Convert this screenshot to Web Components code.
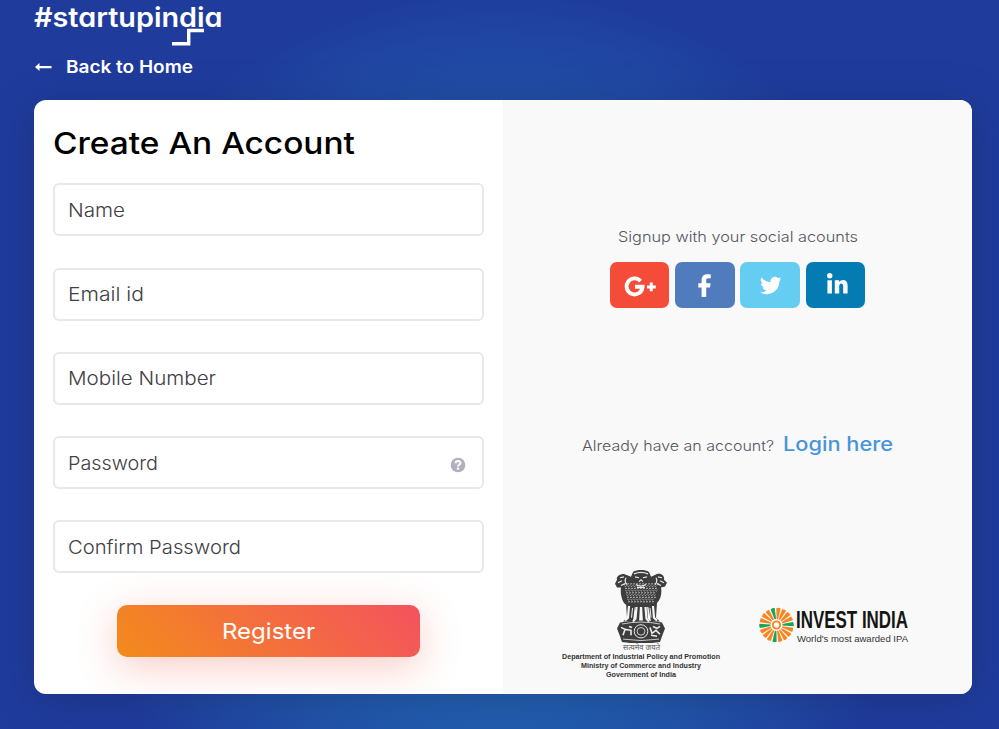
<!DOCTYPE html>
<html lang="en">
<head>
<meta charset="utf-8">
<title>Startup India - Create An Account</title>
<style>
    html, body {
        margin: 0;
        height: 100%;
        overflow: hidden;
        font-family: Inter, "Open Sans", sans-serif;
    }
</style>
</head>
<body>
<signup-page></signup-page>

<script>
// One line of text set to an exact measure. Caps are centred on the box.
class FitText extends HTMLElement {
    constructor() {
        super();
        this.attachShadow({ mode: "open" });
    }

    connectedCallback() {
        const width = Number(this.getAttribute("width"));
        const size = Number(this.getAttribute("size"));
        const height = Math.round(size * 1.2);
        const baseline = height / 2 + size * 0.364;

        this.shadowRoot.innerHTML = `
            <style>
                :host { display: block; flex: none; width: ${width}px; height: ${height}px; }
                svg { display: block; overflow: visible; }
                text { fill: currentColor; font-size: ${size}px; }
            </style>
            <svg width="${width}" height="${height}">
                <text x="0" y="${baseline}" textLength="${width}" lengthAdjust="spacingAndGlyphs">${this.textContent}</text>
            </svg>
        `;
    }
}
customElements.define("fit-text", FitText);

class SiteLogo extends HTMLElement {
    constructor() {
        super();
        this.attachShadow({ mode: "open" });
        this.shadowRoot.innerHTML = `
            <style>
                :host { display: block; width: 190px; height: 50px; }
                svg { display: block; }
                text { font: 600 27px Inter, sans-serif; font-feature-settings: "cv11"; fill: #fff; }
            </style>
            <svg width="190" height="50">
                <text x="0" y="26.500" textLength="188.500" lengthAdjust="spacingAndGlyphs">#startupindia</text>
                <path d="M170 30.500H154.700V43.800H138" fill="none" stroke="#fff" stroke-width="3.400"/>
            </svg>
        `;
    }
}
customElements.define("site-logo", SiteLogo);

class BackLink extends HTMLElement {
    constructor() {
        super();
        this.attachShadow({ mode: "open" });
        this.shadowRoot.innerHTML = `
            <style>
                :host { display: flex; align-items: center; color: #fff; font-weight: 600; }
                svg { display: block; margin-right: 13.500px; }
            </style>
            <svg width="18" height="10"><path d="M1 5L5.500 1V3.900H17.500V6.200H5.500V9Z" fill="#fff"/></svg>
            <slot></slot>
        `;
    }
}
customElements.define("back-link", BackLink);

class FormField extends HTMLElement {
    constructor() {
        super();
        this.attachShadow({ mode: "open" });
    }

    connectedCallback() {
        const help = this.hasAttribute("help") ? `
            <svg width="16" height="16" viewBox="0 0 16 16">
                <circle cx="8" cy="8" r="7.300" fill="#b1b0bd"/>
                <path d="M5.600 6.300C5.700 3.200 10.400 3.300 10.400 6C10.400 7.800 8 7.700 8 9.400" fill="none" stroke="#fff" stroke-width="2.100"/>
                <rect x="6.900" y="10.600" width="2.200" height="2.100" fill="#fff"/>
            </svg>` : "";
        this.shadowRoot.innerHTML = `
            <style>
                :host {
                    display: flex;
                    box-sizing: border-box;
                    align-items: center;
                    justify-content: space-between;
                    height: 53px;
                    padding: 0 16px 0 13px;
                    border: 2px solid #e8e8e8;
                    border-radius: 6px;
                    color: #404045;
                    font-weight: 300;
                }
                svg { display: block; margin-top: 4px; }
            </style>
            <slot></slot>${help}
        `;
    }
}
customElements.define("form-field", FormField);

class RegisterButton extends HTMLElement {
    constructor() {
        super();
        this.attachShadow({ mode: "open" });
        this.shadowRoot.innerHTML = `
            <style>
                :host {
                    display: flex;
                    align-items: center;
                    justify-content: center;
                    width: 303px;
                    height: 52px;
                    border-radius: 10px;
                    color: #fff;
                    background: linear-gradient(45deg, #f38b1c, #f4525f);
                    box-shadow: 0 10px 40px rgba(239, 87, 60, .3);
                    cursor: pointer;
                }
            </style>
            <slot></slot>
        `;
    }
}
customElements.define("register-button", RegisterButton);

const SOCIAL = {
    google: {
        color: "#f44c39",
        icon: `<path d="M32.800 18.900A8 8 0 1 0 34.800 24.600H27.200" fill="none" stroke="#fff" stroke-width="3.900"
                transform="translate(-2.200 .2)"/>
               <path d="M41.300 20.600V29.200M37 24.900H45.800" stroke="#fff" stroke-width="3"/>`
    },
    facebook: {
        color: "#507cbe",
        icon: `<path d="M26.600 35V25.400H23.300V21.300H26.600V18.200C26.600 14.400 28.800 12.300 32.400 12.300C34 12.300 35.400 12.400 35.800 12.500V16.300H33.400C31.600 16.300 31.200 17.200 31.200 18.500V21.300H35.600L35 25.400H31.200V35Z" fill="#fff"/>`
    },
    twitter: {
        color: "#65ccf2",
        icon: `<path transform="translate(19.400 12.700) scale(.93)" fill="#fff" d="M23.600 4.600c-.8.4-1.700.6-2.700.7 1-.6 1.700-1.500 2-2.600-.9.5-1.900.9-3 1.100A4.700 4.700 0 0 0 11.900 8C8 7.800 4.600 5.900 2.200 3.100a4.700 4.700 0 0 0 1.500 6.300c-.8 0-1.500-.2-2.100-.6 0 2.300 1.600 4.200 3.800 4.700-.7.200-1.400.2-2.100.1.600 1.900 2.300 3.200 4.400 3.300A9.500 9.500 0 0 1 .8 18.800a13.400 13.400 0 0 0 20.600-11.900c.9-.6 1.700-1.400 2.200-2.300z"/>`
    },
    linkedin: {
        color: "#047bb3",
        icon: `<circle cx="23.700" cy="13.700" r="2.700" fill="#fff"/>
               <path d="M21.400 18.200H25.900V31.600H21.400ZM28.800 18.200H33.100V20C35.200 16.700 41.600 17 41.600 23.200V31.600H37.200V24.400C37.200 20.500 33.200 20.700 33.200 24.400V31.600H28.800Z" fill="#fff"/>`
    }
};

class SocialButton extends HTMLElement {
    constructor() {
        super();
        this.attachShadow({ mode: "open" });
    }

    connectedCallback() {
        const { color, icon } = SOCIAL[this.getAttribute("network")];
        this.shadowRoot.innerHTML = `
            <style>
                :host {
                    display: block;
                    width: 59.500px;
                    height: 46px;
                    border-radius: 7px;
                    background: ${color};
                    cursor: pointer;
                }
                svg { display: block; }
            </style>
            <svg width="60" height="46">${icon}</svg>
        `;
    }
}
customElements.define("social-button", SocialButton);

// Lion capital with the department's name below it
class StateEmblem extends HTMLElement {
    constructor() {
        super();
        this.attachShadow({ mode: "open" });

        // tufts of the manes
        let mane = "";
        for (let row = 0; row < 9; row++) {
            const half = 17 - row * 0.5;
            for (let x = -half; x < half; x += 3) {
                mane += `M${(26 + x).toFixed(1)} ${(14 + row * 2.3).toFixed(1)}q1 1.500 2-.3`;
            }
        }

        this.shadowRoot.innerHTML = `
            <style>
                :host { display: flex; flex-direction: column; align-items: center; width: 158px; color: #333; }
                svg { display: block; margin-right: 2px; }
                .motto { margin: 0 2px 0 0; color: #555; font-family: "Noto Sans", sans-serif; }
                .lines {
                    display: flex;
                    flex-direction: column;
                    align-items: center;
                    margin-right: 2px;
                    font-family: "Liberation Sans", sans-serif;
                    font-weight: bold;
                }
            </style>
            <svg width="52" height="73" viewBox="0 0 52 75" preserveAspectRatio="none">
                <g fill="#3d3d3d">
                    <path d="M9 4C4 4 1 7 2 10L0 14L2 18L6 18C5 24 7 32 10 35L15 38H38L42 34C46 30 47 23 46 18L50 17L52 13L49 10C50 6 46 3 42 4L36 7L34 2C30-.5 22-.5 18 2L16 7Z"/>
                    <path d="M11 34L20 36L18 53H8L12 49ZM20 36H25L24 54H17L20 50ZM27 36H32L33 50L36 54H28ZM33 36L42 34L41 49L45 53H36Z"/>
                    <path d="M5 54Q26 50 47 54L50 60L47 68L45 74Q26 77 7 74L5 68L2 60Z"/>
                </g>
                <path d="${mane}" stroke="#c4c4c4" stroke-width=".9" fill="none"/>
                <g fill="none" stroke="#e8e8e8" stroke-width="1.200">
                    <path d="M19 4Q26 1 33 4M20 7L24 8M28 8L32 7M24 12L26 10L28 12M21 15Q26 18 31 15M22 18H30"/>
                    <path d="M5 8L9 7M3 13L7 11M6 16L10 14M11 8Q9 12 12 15M47 8L43 7M49 13L45 11M46 16L42 14M41 8Q43 12 40 15"/>
                </g>
                <g fill="none" stroke="#f4f4f4" stroke-width="2.200">
                    <path d="M14 37L13 49L10 52M21.500 38L20.500 50L18 53M30.500 38L31.500 50L34 53M38 37L39 49L42 52" />
                    <path d="M26 38V51M17.500 39L16.500 49M35 39L36 49" stroke-width="1"/>
                </g>
                <g fill="none" stroke="#ededed">
                    <circle cx="26" cy="63" r="6.800" stroke-width="1"/>
                    <circle cx="26" cy="63" r="3.900" stroke-width=".8"/>
                    <path d="M6 59L10 61L8 67M10 61L16 62V67M14 58L17 59M35 59L37 65L41 62L45 66M38 58L42 60L45 58M36 67L42 68" stroke-width="1.600"/>
                    <path d="M7 55.500Q26 51.500 45 55.500M8 71Q26 74 44 71" stroke-width=".8"/>
                </g>
            </svg>
            <fit-text class="motto" width="37" size="7.500">सत्यमेव जयते</fit-text>
            <div class="lines">
                <fit-text width="158" size="7.500">Department of Industrial Policy and Promotion</fit-text>
                <fit-text width="120" size="7.500">Ministry of Commerce and Industry</fit-text>
                <fit-text width="70" size="7.500">Government of India</fit-text>
            </div>
        `;
    }
}
customElements.define("state-emblem", StateEmblem);

class InvestIndia extends HTMLElement {
    constructor() {
        super();
        this.attachShadow({ mode: "open" });

        const petals = 18;
        const green = [4, 9, 13, 17];
        let wheel = "";
        for (let i = 0; i < petals; i++) {
            const color = green.includes(i) ? "#18a55a" : "#fa841f";
            wheel += `<path d="M-.7-6L-2.500-16.500Q-.5-17.800 1.800-17L.8-6Z" fill="${color}" transform="rotate(${i * 360 / petals + 8})"/>`;
        }

        this.shadowRoot.innerHTML = `
            <style>
                :host { display: flex; align-items: flex-start; gap: 2px; color: #151515; }
                svg { display: block; margin-top: 2px; }
                .words { display: flex; flex-direction: column; }
                .name { font-family: "Liberation Sans", sans-serif; font-weight: 700; }
                .tag { margin-top: -1.500px; margin-left: 1px; color: #333; font-family: "Liberation Sans", sans-serif; }
            </style>
            <svg width="35" height="36" viewBox="-17.500 -18 35 36">
                ${wheel}
                <circle r="3.700" fill="none" stroke="#fa841f" stroke-width="1.800"/>
            </svg>
            <div class="words">
                <fit-text class="name" width="112" size="24.500">INVEST INDIA</fit-text>
                <fit-text class="tag" width="111" size="9.300">World's most awarded IPA</fit-text>
            </div>
        `;
    }
}
customElements.define("invest-india", InvestIndia);

class SignupCard extends HTMLElement {
    constructor() {
        super();
        this.attachShadow({ mode: "open" });
        this.shadowRoot.innerHTML = `
            <style>
                :host {
                    display: grid;
                    grid-template-columns: 1fr 1fr;
                    width: 938px;
                    height: 594px;
                    border-radius: 12px;
                    overflow: hidden;
                    background: #fff;
                    box-shadow: 0 5px 40px rgba(27, 30, 70, .34);
                }
                .form { box-sizing: border-box; padding: 24.400px 19px 0; }
                .title { color: #000; font-weight: 550; }
                .fields { display: flex; flex-direction: column; gap: 31.250px; margin-top: 22px; }
                register-button { margin: 32px auto 0; }
                .side {
                    display: flex;
                    flex-direction: column;
                    align-items: center;
                    background: #f9f9f9;
                    color: #55555f;
                    font-weight: 300;
                }
                .hint { margin-top: 128px; }
                .social { display: flex; gap: 5.700px; margin-top: 17px; }
                .login { display: flex; align-items: center; gap: 9px; margin-top: 124px; }
                .login .ask { margin-top: 3px; }
                .login .link { color: #4795d9; font-weight: 500; }
                .partners { display: flex; align-items: flex-start; gap: 38px; margin: 115px 4px 0 0; font-weight: 400; }
                invest-india { margin-top: 35px; }
            </style>
            <div class="form">
                <fit-text class="title" width="302" size="30.500">Create An Account</fit-text>
                <div class="fields">
                    <form-field><fit-text width="57" size="18.500">Name</fit-text></form-field>
                    <form-field><fit-text width="76" size="18.500">Email id</fit-text></form-field>
                    <form-field><fit-text width="148" size="18.500">Mobile Number</fit-text></form-field>
                    <form-field help><fit-text width="90" size="18.500">Password</fit-text></form-field>
                    <form-field><fit-text width="173" size="18.500">Confirm Password</fit-text></form-field>
                </div>
                <register-button><fit-text width="93" size="22">Register</fit-text></register-button>
            </div>
            <div class="side">
                <fit-text class="hint" width="240" size="14.500">Signup with your social acounts</fit-text>
                <div class="social">
                    <social-button network="google"></social-button>
                    <social-button network="facebook"></social-button>
                    <social-button network="twitter"></social-button>
                    <social-button network="linkedin"></social-button>
                </div>
                <div class="login">
                    <fit-text class="ask" width="192" size="14.500">Already have an account?</fit-text>
                    <fit-text class="link" width="110" size="19.500">Login here</fit-text>
                </div>
                <div class="partners">
                    <state-emblem></state-emblem>
                    <invest-india></invest-india>
                </div>
            </div>
        `;
    }
}
customElements.define("signup-card", SignupCard);

class SignupPage extends HTMLElement {
    constructor() {
        super();
        this.attachShadow({ mode: "open" });
        this.shadowRoot.innerHTML = `
            <style>
                :host {
                    display: block;
                    box-sizing: border-box;
                    height: 100%;
                    padding-left: 34px;
                    background: radial-gradient(circle 455px at 500px 445px, #2690ca, #1f3c9d);
                }
                back-link { height: 33px; }
                signup-card { margin-top: 17px; }
            </style>
            <site-logo></site-logo>
            <back-link><fit-text width="127" size="17.500">Back to Home</fit-text></back-link>
            <signup-card></signup-card>
        `;
    }
}
customElements.define("signup-page", SignupPage);
</script>
</body>
</html>
